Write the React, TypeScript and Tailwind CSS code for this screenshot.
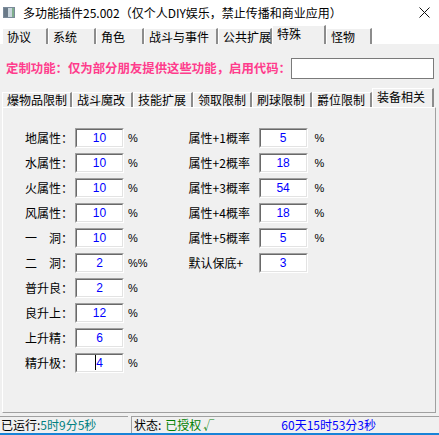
import React from "react";

const row1 = [
  { label: "协议", w: 46 },
  { label: "系统", w: 48 },
  { label: "角色", w: 48 },
  { label: "战斗与事件", w: 74 },
  { label: "公共扩展", w: 54 },
  { label: "特殊", w: 54, active: true },
  { label: "怪物", w: 46 },
];

const row2 = [
  { label: "爆物品限制", w: 70 },
  { label: "战斗魔改", w: 61 },
  { label: "技能扩展", w: 60 },
  { label: "领取限制", w: 59 },
  { label: "刷球限制", w: 60 },
  { label: "爵位限制", w: 60 },
  { label: "装备相关", w: 62, active: true },
];

const leftFields = [
  { label: "地属性：", value: "10", unit: "%" },
  { label: "水属性：", value: "10", unit: "%" },
  { label: "火属性：", value: "10", unit: "%" },
  { label: "风属性：", value: "10", unit: "%" },
  { label: "一　洞：", value: "10", unit: "%" },
  { label: "二　洞：", value: "2", unit: "%%" },
  { label: "普升良：", value: "2", unit: "%" },
  { label: "良升上：", value: "12", unit: "%" },
  { label: "上升精：", value: "6", unit: "%" },
  { label: "精升极：", value: "4", unit: "%", caret: true },
];

const rightFields = [
  { label: "属性+1概率", value: "5", unit: "%" },
  { label: "属性+2概率", value: "18", unit: "%" },
  { label: "属性+3概率", value: "54", unit: "%" },
  { label: "属性+4概率", value: "18", unit: "%" },
  { label: "属性+5概率", value: "5", unit: "%" },
  { label: "默认保底+", value: "3", unit: "" },
];

function Tab({ label, w, active, small }: { label: string; w: number; active?: boolean; small?: boolean }) {
  return (
    <div
      style={{ width: w }}
      className={
        "bg-[#f0f0f0] border-t border-l border-white border-r-2 border-r-[#8c8c8c] pl-[4px] leading-none flex " +
        (active ? "h-[19px] items-start pt-[2px]" : small ? "h-[15px] items-center" : "h-[16px] items-center")
      }
    >
      <span className="text-[12px] text-black whitespace-nowrap">{label}</span>
    </div>
  );
}

function Field({ value, caret }: { value: string; caret?: boolean }) {
  return (
    <div className="w-[49px] h-[20px] border border-t-[#a0a0a0] border-l-[#a0a0a0] border-b-white border-r-white">
      <div className="w-full h-full bg-white border border-t-[#696969] border-l-[#696969] border-b-[#e3e3e3] border-r-[#e3e3e3] flex items-center justify-center">
        <span className="relative font-['Liberation_Sans',sans-serif] text-[12px] text-[#0000ff] leading-none">
          {caret && <span className="absolute left-[-1px] top-[-2px] w-px h-[15px] bg-black" />}
          {value}
        </span>
      </div>
    </div>
  );
}

export default function App() {
  return (
    <div className="w-[439px] h-[435px] bg-[#f0f0f0] flex flex-col overflow-hidden font-['Noto_Sans_CJK_SC','Liberation_Sans',sans-serif] text-black">
      {/* title bar */}
      <div className="h-[25px] bg-white flex items-center pl-[3px] pr-[9px]">
        <div className="w-[12px] h-[11px] border border-[#7a8a9a] flex">
          <div className="w-[4px] bg-[#6a7a88]" />
          <div className="w-[4px] bg-[#c8d4dc]" />
          <div className="flex-1 bg-[#7fae8c]" />
        </div>
        <span className="ml-[8px] text-[12px] leading-none">多功能插件25.002（仅个人DIY娱乐，禁止传播和商业应用）</span>
        <svg className="ml-auto" width="11" height="11" viewBox="0 0 11 11">
          <path d="M0.5 0.5 L10.5 10.5 M10.5 0.5 L0.5 10.5" stroke="#111" strokeWidth="1" />
        </svg>
      </div>

      {/* first tab row */}
      <div className="h-[19px] bg-white flex items-end pl-[2px]">
        {row1.map((t) => (
          <Tab key={t.label} {...t} />
        ))}
      </div>

      {/* custom code row */}
      <div className="mt-[14px] h-[21px] flex items-center pl-[6px] pr-[6px]">
        <span className="text-[12.4px] font-bold text-[#ff3c8c] whitespace-nowrap leading-none">
          定制功能：仅为部分朋友提供这些功能，启用代码：
        </span>
        <div className="ml-auto shrink-0 w-[143px] h-[21px] bg-white border border-[#7a7a7a]" />
      </div>

      {/* second tab row */}
      <div className="mt-[9px] h-[19px] flex items-end pl-[2px]">
        {row2.map((t) => (
          <Tab key={t.label} small {...t} />
        ))}
      </div>

      {/* tab page */}
      <div className="h-[306px] ml-[2px] mr-[3px] border-t border-l border-white border-r border-b border-r-[#a0a0a0] border-b-[#a0a0a0] pt-[20px] flex">
        <div className="ml-[22px] flex flex-col">
          {leftFields.map((f) => (
            <div key={f.label} className="h-[25px] flex items-start">
              <span className="w-[50px] text-[12px] leading-[20px] whitespace-nowrap">{f.label}</span>
              <Field value={f.value} caret={f.caret} />
              <span className="ml-[4px] font-['Liberation_Sans',sans-serif] text-[11px] leading-[20px]">{f.unit}</span>
            </div>
          ))}
        </div>
        <div className="ml-[41px] flex flex-col">
          {rightFields.map((f) => (
            <div key={f.label} className="h-[25px] flex items-start">
              <span className="w-[70px] text-[12px] leading-[20px] whitespace-nowrap">{f.label}</span>
              <Field value={f.value} />
              <span className="ml-[7px] font-['Liberation_Sans',sans-serif] text-[11px] leading-[20px]">{f.unit}</span>
            </div>
          ))}
        </div>
      </div>

      {/* status bar */}
      <div className="mt-[3px] h-[17px] flex text-[12px] leading-none">
        <div className="w-[128px] border-t border-[#a0a0a0] flex items-center pl-[1px]">
          <span>已运行:</span>
          <span className="text-[#008080]">5时9分5秒</span>
        </div>
        <div className="ml-[3px] flex-1 border-t border-l border-[#a0a0a0] flex items-center pl-[2px]">
          <span>状态:</span>
          <span className="ml-[4px] text-[#008000]">已授权</span>
          <span className="ml-[2px] text-[#008000] text-[11px]">√</span>
          <span className="ml-[67px] text-[#0000ff]">60天15时53分3秒</span>
        </div>
      </div>
      <div className="h-[2px] bg-[#1883d7]" />
    </div>
  );
}
